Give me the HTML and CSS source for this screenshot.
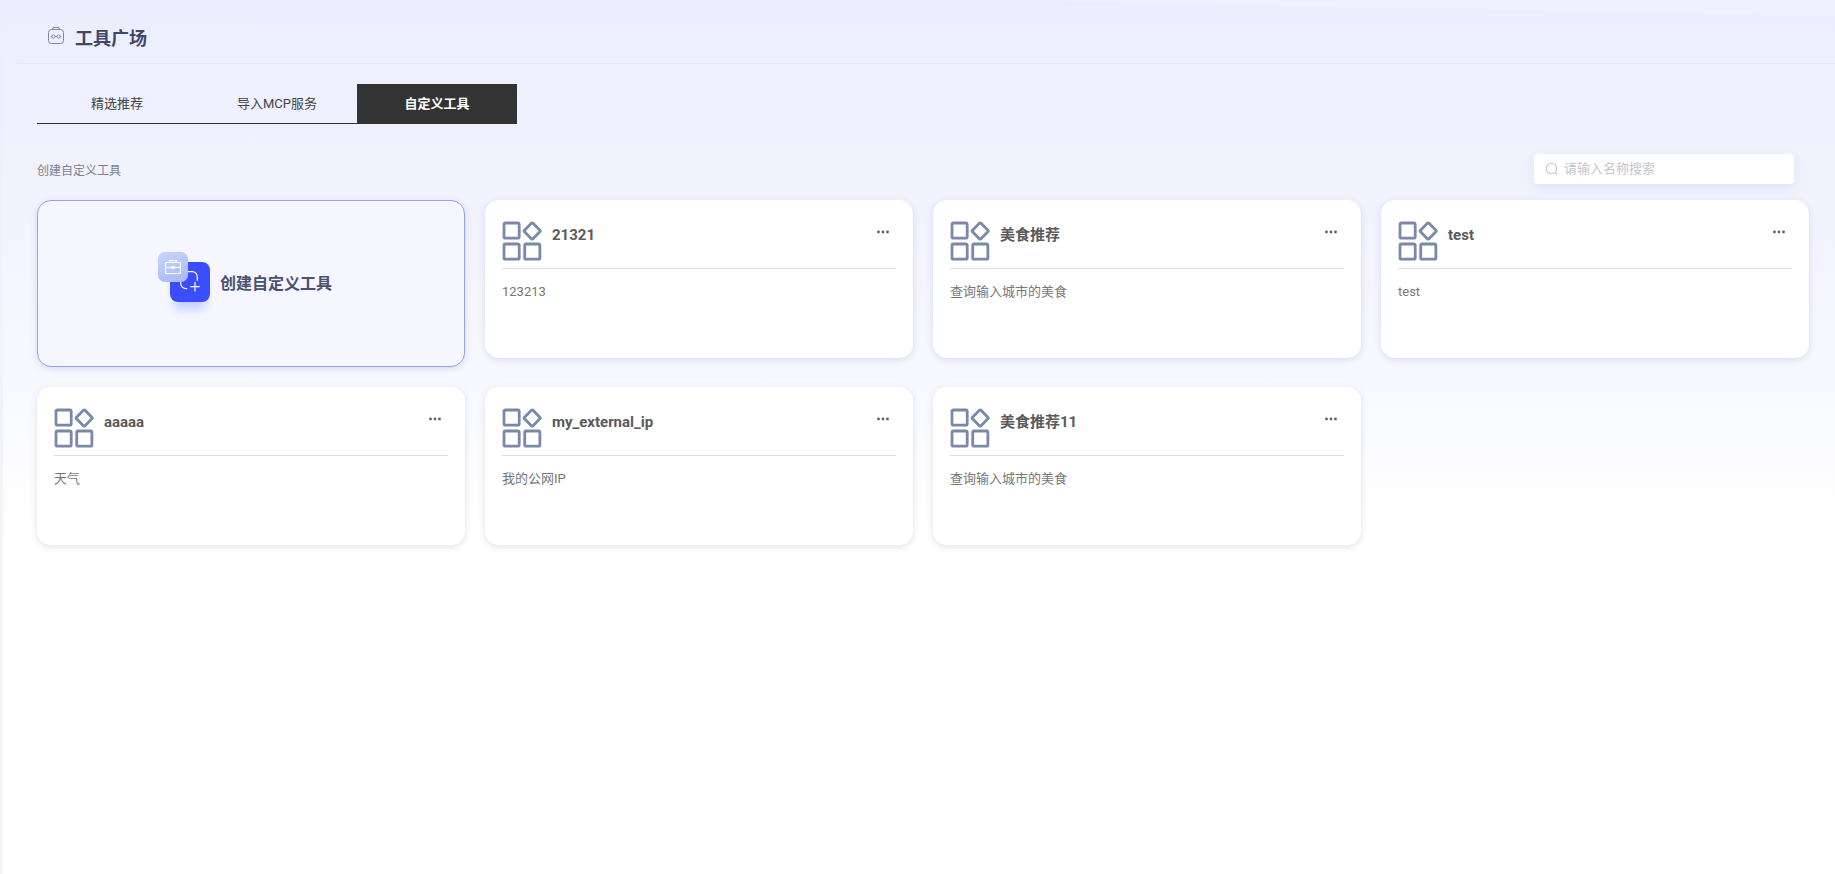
FILE: index.html
```html
<!DOCTYPE html>
<html lang="zh-CN">
<head>
    <meta charset="UTF-8">
    <title>工具广场</title>
    <link rel="stylesheet" href="styles.css">
</head>
<body>
    <svg class="sprites" width="0" height="0">
        <symbol id="tool-icon" viewBox="0 0 40 40">
            <g fill="none" stroke="#7b88a6" stroke-width="2.8" stroke-linejoin="round">
                <rect x="2" y="2" width="15.200" height="15.200" rx="1.500"/>
                <rect x="24.200" y="4" width="12" height="12" rx="1.200" transform="rotate(45 30.200 10)"/>
                <rect x="2" y="23" width="15.200" height="15.200" rx="1.500"/>
                <rect x="22.700" y="23" width="15.200" height="15.200" rx="1.500"/>
            </g>
        </symbol>
        <symbol id="more-icon" viewBox="0 0 12 4">
            <circle cx="1.500" cy="2" r="1.400" fill="#5f6066"/>
            <circle cx="6" cy="2" r="1.400" fill="#5f6066"/>
            <circle cx="10.500" cy="2" r="1.400" fill="#5f6066"/>
        </symbol>
    </svg>

    <div class="main">
        <header class="page-head">
            <svg class="head-icon" width="16" height="17" viewBox="0 0 16 17" fill="none" stroke="#7c86a6" stroke-width="1">
                <rect x="0.500" y="2.500" width="15" height="14" rx="3"/>
                <path d="M4.500 2.500V2a1.500 1.500 0 0 1 1.500-1.500h4A1.500 1.500 0 0 1 11.500 2v.5"/>
                <path d="M2.500 9.500h1M7 9.500h2M12.500 9.500h1"/>
                <circle cx="5.300" cy="9.500" r="1.600"/>
                <circle cx="10.700" cy="9.500" r="1.600"/>
            </svg>
            <h1>工具广场</h1>
        </header>

        <div class="content">
            <div class="tabs">
                <div class="tab">精选推荐</div>
                <div class="tab">导入MCP服务</div>
                <div class="tab active">自定义工具</div>
            </div>

            <div class="toolbar">
                <span class="toolbar-label">创建自定义工具</span>
                <div class="search">
                    <svg width="14" height="14" viewBox="0 0 14 14" fill="none" stroke="#c4c7ce" stroke-width="1.100">
                        <circle cx="6.500" cy="6.500" r="5.200"/>
                        <path d="M10.500 10.500l2 2"/>
                    </svg>
                    <span class="search-text">请输入名称搜索</span>
                </div>
            </div>

            <div class="card-grid">
                <div class="card create-card">
                    <div class="create-icon">
                        <div class="icon-blue">
                            <svg width="40" height="40" viewBox="0 0 40 40" fill="none" stroke="#fff" stroke-width="1.200">
                                <path d="M18 9.700h4.300a5 5 0 0 1 5 5v4"/>
                                <path d="M10.700 19.700v1.500a5.500 5.500 0 0 0 5.500 5.500h1"/>
                                <path d="M25 20v9.400M20.300 24.700h9.400"/>
                            </svg>
                        </div>
                        <div class="icon-pale">
                            <svg width="16" height="14" viewBox="0 0 16 14" fill="none" stroke="#fff" stroke-width="1.100">
                                <rect x="0.500" y="2.500" width="15" height="11" rx="1"/>
                                <path d="M4.500 2.500V0.600h7v1.900"/>
                                <path d="M0.500 7.500h15"/>
                                <rect x="6.800" y="6.500" width="2.400" height="2" fill="#fff"/>
                            </svg>
                        </div>
                    </div>
                    <span class="create-text">创建自定义工具</span>
                </div>

                <div class="card tool-card">
                    <div class="tool-head">
                        <svg class="tool-icon" width="40" height="40"><use href="#tool-icon"/></svg>
                        <span class="tool-name">21321</span>
                        <svg class="tool-more" width="12" height="4"><use href="#more-icon"/></svg>
                    </div>
                    <p class="tool-desc">123213</p>
                </div>

                <div class="card tool-card">
                    <div class="tool-head">
                        <svg class="tool-icon" width="40" height="40"><use href="#tool-icon"/></svg>
                        <span class="tool-name">美食推荐</span>
                        <svg class="tool-more" width="12" height="4"><use href="#more-icon"/></svg>
                    </div>
                    <p class="tool-desc">查询输入城市的美食</p>
                </div>

                <div class="card tool-card">
                    <div class="tool-head">
                        <svg class="tool-icon" width="40" height="40"><use href="#tool-icon"/></svg>
                        <span class="tool-name">test</span>
                        <svg class="tool-more" width="12" height="4"><use href="#more-icon"/></svg>
                    </div>
                    <p class="tool-desc">test</p>
                </div>

                <div class="card tool-card">
                    <div class="tool-head">
                        <svg class="tool-icon" width="40" height="40"><use href="#tool-icon"/></svg>
                        <span class="tool-name">aaaaa</span>
                        <svg class="tool-more" width="12" height="4"><use href="#more-icon"/></svg>
                    </div>
                    <p class="tool-desc">天气</p>
                </div>

                <div class="card tool-card">
                    <div class="tool-head">
                        <svg class="tool-icon" width="40" height="40"><use href="#tool-icon"/></svg>
                        <span class="tool-name">my_external_ip</span>
                        <svg class="tool-more" width="12" height="4"><use href="#more-icon"/></svg>
                    </div>
                    <p class="tool-desc">我的公网IP</p>
                </div>

                <div class="card tool-card">
                    <div class="tool-head">
                        <svg class="tool-icon" width="40" height="40"><use href="#tool-icon"/></svg>
                        <span class="tool-name">美食推荐11</span>
                        <svg class="tool-more" width="12" height="4"><use href="#more-icon"/></svg>
                    </div>
                    <p class="tool-desc">查询输入城市的美食</p>
                </div>
            </div>
        </div>
    </div>
</body>
</html>
```

FILE: styles.css
```css
html, body {
    height: 100%;
}
body {
    margin: 0;
    background: linear-gradient(180deg, #eceefd 0%, #f1f2fb 40%, #f5f5f8 65%);
    font-family: Roboto, "Noto Sans CJK SC", sans-serif;
    overflow: hidden;
}
.sprites {
    display: block;
}
.main {
    height: 100%;
    margin-left: 3px;
    box-sizing: border-box;
    border-top-left-radius: 8px;
    background:
        linear-gradient(181.08deg, #eef0fe 16px, transparent 16px),
        linear-gradient(180deg, #eceefd 0%, #f2f3fe 25%, #f7f8ff 42%, #ffffff 60%);
}
.page-head {
    display: flex;
    align-items: center;
    height: 63px;
    margin-left: 14px;
    padding-left: 31px;
    border-bottom: 1px solid #e6e8f3;
}
.head-icon {
    margin: 8px 11px 0 0;
}
.page-head h1 {
    margin: 10px 0 0;
    font-size: 18px;
    font-weight: 700;
    color: #3f4867;
}
.content {
    padding: 20px 25px 0 34px;
}
.tabs {
    display: flex;
    width: 480px;
    height: 40px;
    box-sizing: border-box;
    border-bottom: 1px solid #2f3244;
}
.tab {
    flex: 1;
    height: 40px;
    line-height: 40px;
    text-align: center;
    font-size: 13px;
    color: #444;
}
.tab.active {
    background: #333;
    color: #fff;
    font-weight: 700;
}
.toolbar {
    display: flex;
    align-items: center;
    justify-content: space-between;
    height: 30px;
    margin-top: 30px;
    padding-right: 16px;
}
.toolbar-label {
    font-size: 12px;
    color: #7b7f8e;
}
.search {
    display: flex;
    align-items: center;
    gap: 5px;
    width: 260px;
    height: 30px;
    box-sizing: border-box;
    padding-left: 11px;
    border-radius: 4px;
    background: #fff;
    box-shadow: 0 4px 12px rgba(90, 105, 190, 0.1);
    font-size: 13px;
    color: #c4c6ce;
}
.search-text {
    margin-bottom: 3px;
}
.card-grid {
    display: grid;
    grid-template-columns: repeat(4, 428px);
    gap: 20px;
    align-items: start;
    margin-top: 16px;
}
.card {
    box-sizing: border-box;
    border-radius: 14px;
    background: #fff;
    box-shadow: 0 2px 7px rgba(70, 80, 130, 0.16);
}
.create-card {
    display: flex;
    align-items: center;
    justify-content: center;
    gap: 10px;
    height: 167px;
    padding-right: 12px;
    border: 1px solid #93a4ef;
    background: #f5f6ff;
}
.create-icon {
    position: relative;
    flex: none;
    width: 52px;
    height: 50px;
    margin-top: -14px;
}
.icon-blue {
    position: absolute;
    left: 12px;
    top: 10px;
    width: 40px;
    height: 40px;
    border-radius: 8px;
    background: #3a4dff;
    box-shadow: 0 12px 10px -5px rgba(60, 95, 255, 0.28);
}
.icon-pale {
    position: absolute;
    left: 0;
    top: 0;
    display: flex;
    align-items: center;
    justify-content: center;
    width: 30px;
    height: 30px;
    border-radius: 7px;
    background: linear-gradient(160deg, #c8d3fb, #a9b8f8);
}
.create-text {
    font-size: 16px;
    line-height: 22px;
    font-weight: 700;
    color: #4a5170;
}
.tool-card {
    height: 158px;
    padding: 21px 17px 0;
}
.tool-head {
    display: flex;
    align-items: flex-start;
    height: 40px;
    padding-bottom: 7px;
    border-bottom: 1px solid #dcdde2;
}
.tool-icon {
    flex: none;
}
.tool-name {
    margin: 4px 0 0 10px;
    font-size: 15px;
    line-height: 20px;
    font-weight: 700;
    color: #5a5a5a;
}
.tool-more {
    flex: none;
    margin: 9px 7px 0 auto;
}
.tool-desc {
    margin: 13px 0 0;
    font-size: 13px;
    line-height: 20px;
    color: #777;
}
```
